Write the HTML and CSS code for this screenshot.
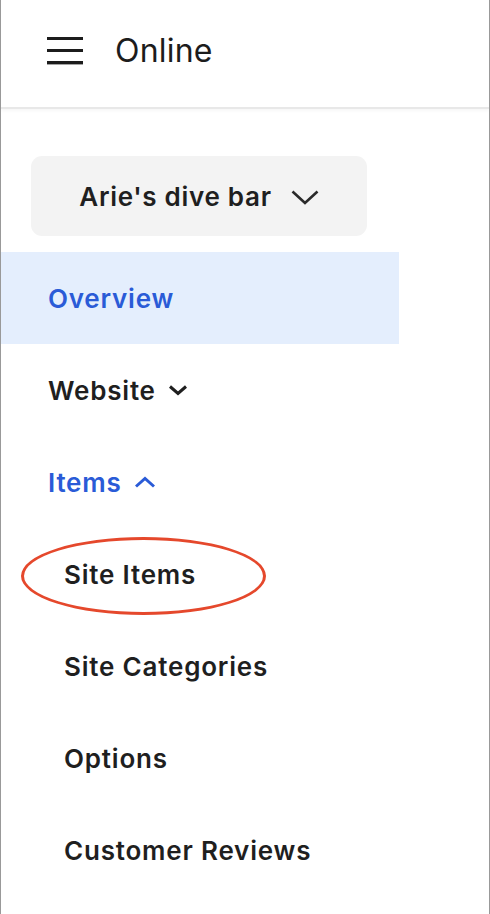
FILE: index.html
```html
<!DOCTYPE html>
<html lang="en">
<head>
<meta charset="utf-8">
<title>Online</title>
<link rel="stylesheet" href="styles.css">
</head>
<body>
<div class="frame">
  <header class="topbar">
    <svg class="burger" width="36" height="28" viewBox="0 0 36 28" aria-hidden="true">
      <rect x="0" y="0" width="36" height="3" fill="#1c1c1c"/>
      <rect x="0" y="12" width="36" height="3" fill="#1c1c1c"/>
      <rect x="0" y="24" width="36" height="3.4" fill="#1c1c1c"/>
    </svg>
    <span class="title">Online</span>
  </header>
  <nav class="nav">
    <div class="store-wrap">
      <button class="store">
        <span>Arie's dive bar</span>
        <svg width="28" height="15" viewBox="0 0 28 15" aria-hidden="true"><path d="M1.5 1.5 L14 13 L26.5 1.5" fill="none" stroke="#2a2a2a" stroke-width="2.6"/></svg>
      </button>
    </div>
    <ul class="menu">
      <li class="item active">Overview</li>
      <li class="item">Website
        <svg class="chev" width="20" height="12" viewBox="0 0 20 12" aria-hidden="true"><path d="M2 2.5 L10 9.5 L18 2.5" fill="none" stroke="#1f1f1f" stroke-width="3"/></svg>
      </li>
      <li class="item open">Items
        <svg class="chev" width="22" height="14" viewBox="0 0 22 14" aria-hidden="true"><path d="M2 11.5 L11 3.5 L20 11.5" fill="none" stroke="#2a5bd7" stroke-width="3"/></svg>
      </li>
      <li class="item sub">Site Items</li>
      <li class="item sub">Site Categories</li>
      <li class="item sub">Options</li>
      <li class="item sub">Customer Reviews</li>
    </ul>
  </nav>
  <div class="annotation"></div>
</div>
</body>
</html>
```
FILE: styles.css
```css
html, body {
  margin: 0;
  padding: 0;
  background: #ffffff;
}
.frame {
  position: relative;
  width: 490px;
  height: 914px;
  box-sizing: border-box;
  border-left: 1px solid #999999;
  border-right: 1px solid #999999;
  overflow: hidden;
  font-family: Inter, "Liberation Sans", sans-serif;
  color: #1f1f1f;
}
.topbar {
  height: 109px;
  box-sizing: border-box;
  padding: 0 0 6px 46px;
  display: flex;
  align-items: center;
  gap: 32px;
  border-bottom: 2px solid #e8e8e8;
  box-shadow: 0 2px 3px rgba(0, 0, 0, 0.035);
}
.burger {
  display: block;
  flex: none;
}
.title {
  font-size: 32px;
  font-weight: 400;
  color: #1c1c1c;
  letter-spacing: 0.2px;
}
.nav {
  padding-top: 47px;
}
.store-wrap {
  padding-left: 30px;
}
.store {
  width: 336px;
  height: 80px;
  border: none;
  border-radius: 11px;
  background: #f3f3f3;
  display: flex;
  align-items: center;
  justify-content: center;
  gap: 19px;
  font-family: inherit;
  font-size: 26px;
  font-weight: 560;
  letter-spacing: 0.7px;
  color: #1f1f1f;
  padding: 0;
}
.store svg {
  display: block;
  margin-top: 2px;
}
.menu {
  list-style: none;
  margin: 16px 0 0;
  padding: 0;
}
.item {
  width: 398px;
  height: 92px;
  box-sizing: border-box;
  padding-left: 47px;
  display: flex;
  align-items: center;
  gap: 12px;
  font-size: 26px;
  font-weight: 560;
  letter-spacing: 0.8px;
  color: #1f1f1f;
}
.item.active {
  background: #e4eefd;
  color: #2a5bd7;
}
.item.open {
  color: #2a5bd7;
}
.item.sub {
  padding-left: 63px;
}
.chev {
  display: block;
}
.annotation {
  position: absolute;
  left: 20px;
  top: 537px;
  width: 245px;
  height: 78px;
  box-sizing: border-box;
  border: 3px solid #e5482c;
  border-radius: 50%;
  pointer-events: none;
}
```
